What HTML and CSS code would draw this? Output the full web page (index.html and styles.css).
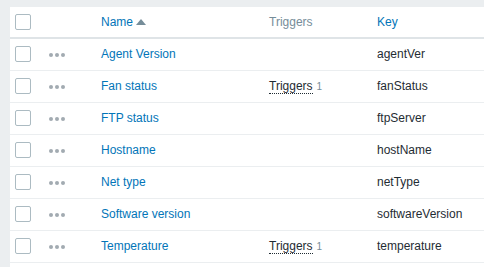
FILE: index.html
```html
<!DOCTYPE html>
<html lang="en">
  <head>
    <meta charset="UTF-8" />
    <meta name="viewport" content="width=device-width, initial-scale=1.0" />
    <title>Items</title>
    <link rel="stylesheet" href="styles.css">
  </head>
  <body>
    <div class="wrapper">
      <div class="panel">
        <table class="list-table">
          <colgroup>
            <col class="col-check" />
            <col class="col-action" />
            <col class="col-name" />
            <col class="col-triggers" />
            <col class="col-key" />
          </colgroup>
          <thead>
            <tr>
              <th><span class="checkbox"></span></th>
              <th></th>
              <th><a class="sort-link" href="#">Name<span class="arrow-up"></span></a></th>
              <th class="muted">Triggers</th>
              <th><a class="sort-link" href="#">Key</a></th>
            </tr>
          </thead>
          <tbody>
            <tr>
              <td><span class="checkbox"></span></td>
              <td><span class="dots"><i></i><i></i><i></i></span></td>
              <td><a href="#">Agent Version</a></td>
              <td></td>
              <td>agentVer</td>
            </tr>
            <tr>
              <td><span class="checkbox"></span></td>
              <td><span class="dots"><i></i><i></i><i></i></span></td>
              <td><a href="#">Fan status</a></td>
              <td><a class="link-alt" href="#">Triggers</a><sup class="count">1</sup></td>
              <td>fanStatus</td>
            </tr>
            <tr>
              <td><span class="checkbox"></span></td>
              <td><span class="dots"><i></i><i></i><i></i></span></td>
              <td><a href="#">FTP status</a></td>
              <td></td>
              <td>ftpServer</td>
            </tr>
            <tr>
              <td><span class="checkbox"></span></td>
              <td><span class="dots"><i></i><i></i><i></i></span></td>
              <td><a href="#">Hostname</a></td>
              <td></td>
              <td>hostName</td>
            </tr>
            <tr>
              <td><span class="checkbox"></span></td>
              <td><span class="dots"><i></i><i></i><i></i></span></td>
              <td><a href="#">Net type</a></td>
              <td></td>
              <td>netType</td>
            </tr>
            <tr>
              <td><span class="checkbox"></span></td>
              <td><span class="dots"><i></i><i></i><i></i></span></td>
              <td><a href="#">Software version</a></td>
              <td></td>
              <td>softwareVersion</td>
            </tr>
            <tr>
              <td><span class="checkbox"></span></td>
              <td><span class="dots"><i></i><i></i><i></i></span></td>
              <td><a href="#">Temperature</a></td>
              <td><a class="link-alt" href="#">Triggers</a><sup class="count">1</sup></td>
              <td>temperature</td>
            </tr>
          </tbody>
        </table>
      </div>
    </div>
  </body>
</html>
```

FILE: styles.css
```css
:root {
  --bg-color: #ebeef0;
  --link-color: #0275b8;
  --text-color: #1f2c33;
  --muted-color: #768d99;
  --line-color: #ebeef0;
  --head-line-color: #dfe4e7;
  --check-border: #acbbc2;
  --font-family: Arial, "Liberation Sans", sans-serif;
}
* {
  margin: 0;
  padding: 0;
  box-sizing: border-box;
}
html,
body {
  height: 100%;
  overflow: hidden;
}
body {
  background-color: var(--bg-color);
  font-family: var(--font-family);
  font-size: 12px;
  color: var(--text-color);
}
.wrapper {
  height: 100%;
  padding: 7px 0 0 10px;
}
.panel {
  height: 100%;
  background-color: #fff;
}
.list-table {
  width: 100%;
  table-layout: fixed;
  border-collapse: collapse;
}
.col-check {
  width: 33px;
}
.col-action {
  width: 53px;
}
.col-name {
  width: 168px;
}
.col-triggers {
  width: 108px;
}
th,
td {
  padding: 0 5px;
  text-align: left;
  font-weight: normal;
  white-space: nowrap;
  vertical-align: middle;
}
th {
  height: 31px;
  padding-bottom: 1px;
  border-bottom: 2px solid var(--head-line-color);
}
td {
  height: 32px;
  padding-bottom: 1px;
  border-bottom: 1px solid var(--line-color);
}
a {
  color: var(--link-color);
  text-decoration: none;
}
.muted {
  color: var(--muted-color);
}
.sort-link {
  display: inline-flex;
  align-items: center;
}
.arrow-up {
  width: 0;
  height: 0;
  margin-left: 3px;
  border-left: 5px solid transparent;
  border-right: 5px solid transparent;
  border-bottom: 6px solid var(--muted-color);
}
.checkbox {
  display: block;
  width: 16px;
  height: 16px;
  border: 1px solid var(--check-border);
  border-radius: 2px;
  background-color: #fff;
}
.dots {
  display: flex;
  gap: 2px;
  padding-left: 1px;
  margin-top: 3px;
}
.dots i {
  width: 4px;
  height: 4px;
  border-radius: 50%;
  background-color: #a2abb1;
}
.link-alt {
  color: var(--text-color);
  border-bottom: 1px dotted var(--text-color);
}
.count {
  margin-left: 4px;
  font-size: 10px;
  color: var(--muted-color);
  vertical-align: baseline;
}
```
